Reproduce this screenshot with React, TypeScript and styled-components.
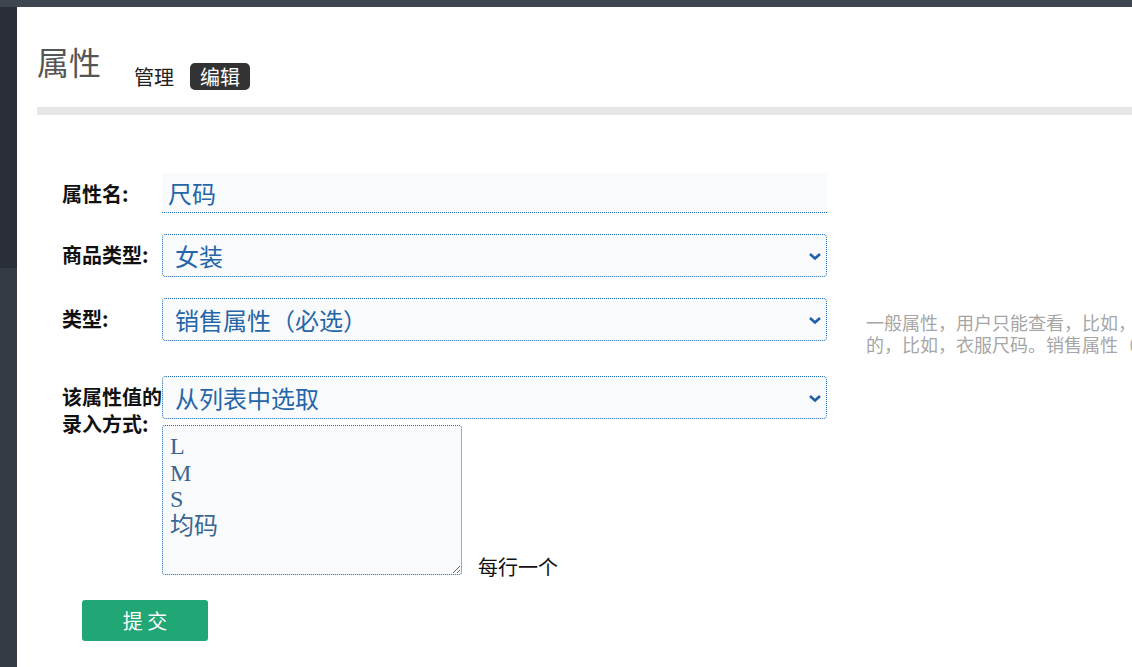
import styled, { createGlobalStyle } from "styled-components"

const GlobalStyle = createGlobalStyle`
	html, body {
		margin: 0;
		padding: 0;
		overflow: hidden;
		background: #fff;
		font-family: "Noto Sans CJK SC", "Noto Sans", sans-serif;
	}
	* {
		box-sizing: border-box;
	}
`

const Page = styled.div`
	display: flex;
	flex-direction: column;
	min-height: 100vh;
`

const TopBar = styled.div`
	height: 7px;
	background: #3e4650;
	flex-shrink: 0;
`

const Body = styled.div`
	display: flex;
	flex: 1;
`

const Sidebar = styled.aside`
	width: 17px;
	flex-shrink: 0;
	background: linear-gradient(#2a2f37 0, #2a2f37 261px, #343b42 261px);
`

const Main = styled.main`
	flex: 1;
	min-width: 0;
	padding-left: 20px;
	overflow: hidden;
`

const Header = styled.header`
	display: flex;
	align-items: flex-start;
	padding-top: 34px;
`

const Title = styled.h1`
	margin: 0;
	font-size: 32px;
	line-height: 40px;
	font-weight: 400;
	color: #555;
`

const Nav = styled.nav`
	display: flex;
	align-items: center;
	gap: 16px;
	margin: 22px 0 0 33px;
`

const NavItem = styled.a<{ $active?: boolean }>`
	font-size: 20px;
	line-height: 27px;
	color: ${(p) => (p.$active ? "#fff" : "#222")};
	background: ${(p) => (p.$active ? "#333" : "transparent")};
	padding: ${(p) => (p.$active ? "0 10px" : "0")};
	border-radius: 5px;
	text-decoration: none;
	cursor: pointer;
`

const Divider = styled.div`
	height: 8px;
	margin-top: 17px;
	background: #e6e6e6;
`

const Form = styled.form`
	padding: 58px 0 0 25px;
`

const Row = styled.div`
	display: flex;
	align-items: flex-start;
	margin-bottom: 21px;
`

const Label = styled.label`
	width: 100px;
	flex-shrink: 0;
	padding-top: 7px;
	font-size: 20px;
	line-height: 27px;
	font-weight: 700;
	color: #111;
`

const Field = styled.div`
	display: flex;
	flex-direction: column;
	flex-shrink: 0;
`

const TextInput = styled.input`
	width: 665px;
	height: 40px;
	padding: 0 6px;
	border: none;
	border-bottom: 1px dotted #1a68b0;
	background: #f8fafc;
	font-family: inherit;
	font-size: 24px;
	color: #2566a8;
	outline: none;
`

const SelectWrap = styled.div`
	position: relative;
	width: 665px;
`

const Select = styled.select`
	width: 100%;
	height: 43px;
	padding: 0 30px 0 12px;
	border: 1px dotted #1a68b0;
	border-radius: 4px;
	background: #f8fafc;
	font-family: inherit;
	font-size: 24px;
	color: #2566a8;
	appearance: none;
	outline: none;
`

const Chevron = styled.svg`
	position: absolute;
	right: 6px;
	top: 50%;
	margin-top: -3px;
	pointer-events: none;
`

const Help = styled.div`
	flex-shrink: 0;
	width: 29.3em;
	margin: 13px 0 0 39px;
	font-size: 18px;
	line-height: 22px;
	color: #a6a6a6;
`

const ValuesRow = styled.div`
	display: flex;
	align-items: flex-end;
	margin-top: 6px;
`

const Values = styled.textarea`
	width: 300px;
	height: 150px;
	padding: 7px 7px;
	border: 1px dotted #1a68b0;
	border-radius: 3px;
	background: #f8fafc;
	font-family: "Liberation Serif", "Noto Sans CJK SC", serif;
	font-size: 24px;
	line-height: 26.5px;
	color: #3a6592;
	outline: none;
`

const Hint = styled.span`
	margin: 0 0 -5px 16px;
	font-size: 20px;
	line-height: 27px;
	color: #111;
`

const Submit = styled.button`
	width: 126px;
	height: 41px;
	margin: 4px 0 0 20px;
	border: none;
	border-radius: 3px;
	background: #21a675;
	color: #fff;
	font-family: inherit;
	font-size: 20px;
	cursor: pointer;
`

const ArrowIcon = () => (
	<Chevron width="12" height="7" viewBox="0 0 12 7">
		<polyline points="1,1 6,5.5 11,1" fill="none" stroke="#1f5fa6" strokeWidth="2.6" />
	</Chevron>
)

export default function App() {
	return (
		<Page>
			<GlobalStyle />
			<TopBar />
			<Body>
				<Sidebar />
				<Main>
					<Header>
						<Title>属性</Title>
						<Nav>
							<NavItem>管理</NavItem>
							<NavItem $active>编辑</NavItem>
						</Nav>
					</Header>
					<Divider />

					<Form onSubmit={(e) => e.preventDefault()}>
						<Row>
							<Label>属性名:</Label>
							<Field>
								<TextInput defaultValue="尺码" />
							</Field>
						</Row>

						<Row>
							<Label>商品类型:</Label>
							<Field>
								<SelectWrap>
									<Select defaultValue="女装">
										<option>女装</option>
										<option>男装</option>
									</Select>
									<ArrowIcon />
								</SelectWrap>
							</Field>
						</Row>

						<Row>
							<Label>类型:</Label>
							<Field>
								<SelectWrap>
									<Select defaultValue="销售属性（必选）">
										<option>一般属性</option>
										<option>销售属性（必选）</option>
									</Select>
									<ArrowIcon />
								</SelectWrap>
							</Field>
							<Help>
								一般属性，用户只能查看，比如，材质；销售属性，用户可以选择的，比如，衣服尺码。销售属性（必选）在购买时必须选择。
							</Help>
						</Row>

						<Row>
							<Label>该属性值的录入方式:</Label>
							<Field>
								<SelectWrap>
									<Select defaultValue="从列表中选取">
										<option>手工录入</option>
										<option>从列表中选取</option>
									</Select>
									<ArrowIcon />
								</SelectWrap>
								<ValuesRow>
									<Values defaultValue={"L\nM\nS\n均码"} />
									<Hint>每行一个</Hint>
								</ValuesRow>
							</Field>
						</Row>

						<Submit type="submit">提 交</Submit>
					</Form>
				</Main>
			</Body>
		</Page>
	)
}
